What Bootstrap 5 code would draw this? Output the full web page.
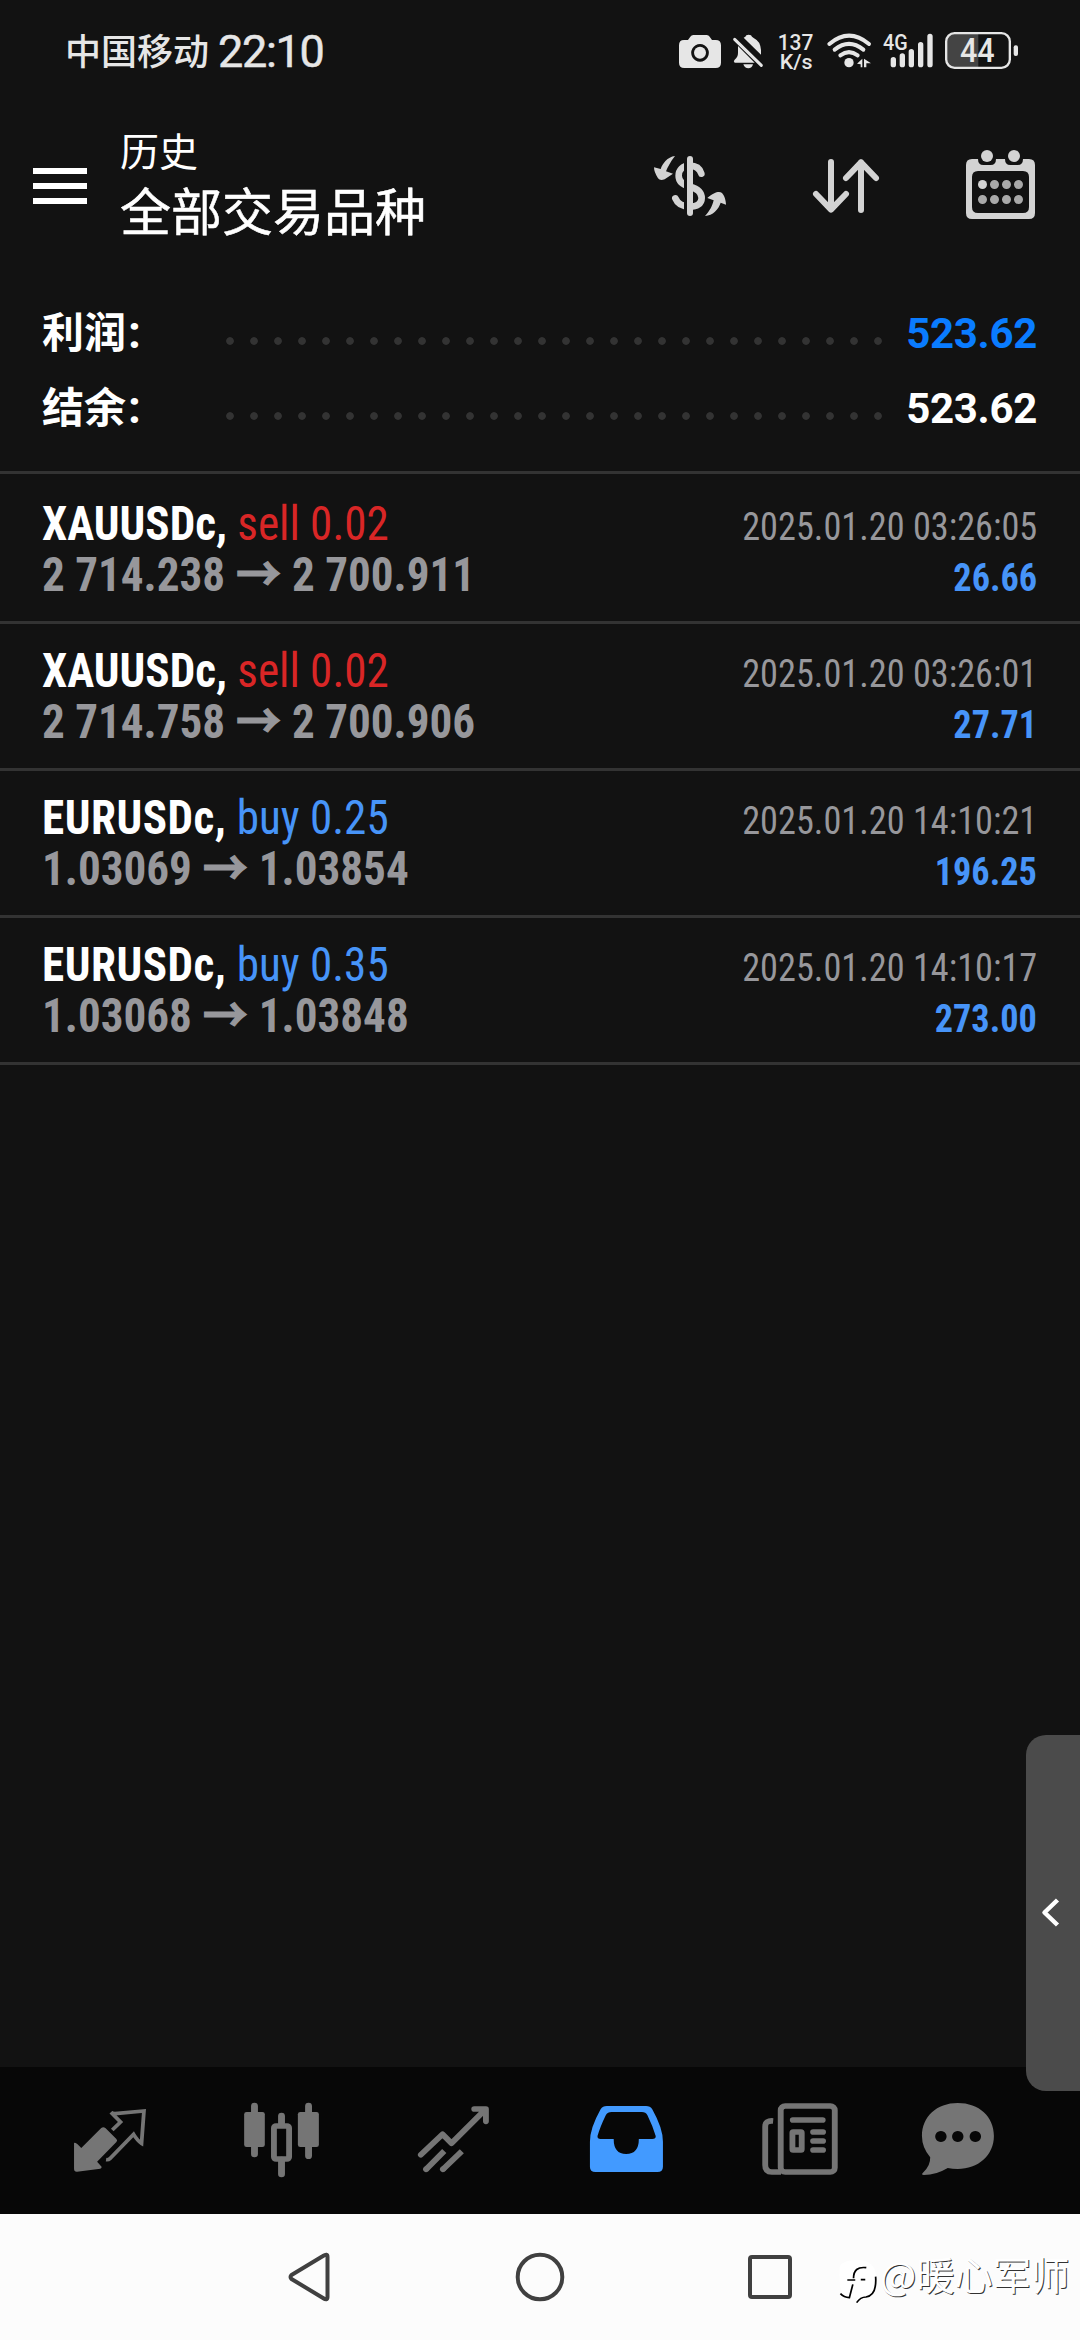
<!DOCTYPE html>
<html lang="zh-CN">
<head>
<meta charset="utf-8">
<meta name="viewport" content="width=device-width, initial-scale=1">
<title>历史</title>
<link href="https://cdn.jsdelivr.net/npm/bootstrap@5.3.0/dist/css/bootstrap.min.css" rel="stylesheet">
<style>
  body { background:#121212; color:#fff; font-family:Roboto,"Noto Sans CJK SC",sans-serif; width:1080px; height:2340px; overflow:hidden; }
  svg { display:block; flex:none; overflow:visible; }
  .status-bar { height:105px; padding:30px 61px 0 65px; color:#e6e6e6; }
  .carrier { font-size:36px; line-height:42px; font-weight:500; padding-top:2px; }
  .clock { font-size:45px; line-height:42px; letter-spacing:-1.3px; margin-left:9px; padding-top:1px; -webkit-text-stroke:.5px #e6e6e6; }
  .app-bar { height:180px; padding:0 45px 0 33px; }
  .menu-btn { padding-top:63px; width:87px; }
  .sub-title { font-size:39px; line-height:46px; margin-top:25px; }
  .main-title { font-size:51px; line-height:60px; margin-top:8px; -webkit-text-stroke:.5px #fff; }
  .summary { height:189px; padding:11px 43px 0 42px; }
  .sum-row { height:75px; font-weight:700; }
  .sum-label { width:176px; font-size:42px; line-height:75px; }
  .sum-label i { font-style:normal; margin-left:2px; font-size:46px; line-height:0; }
  .sum-dots { width:672px; height:24px; margin-top:33px; background:radial-gradient(circle at 12px 12px,#333 3.4px,transparent 4.2px) 0 0/24px 24px repeat-x; }
  .sum-value { font-size:42px; line-height:75px; letter-spacing:-.3px; }
  .text-profit { color:#0a7cff; }
  .rule { border-bottom:3px solid #333; }
  .deals { padding-top:3px; }
  .deal { height:147px; padding:21px 43px 0 42px; }
  .deal-line { height:51px; font-size:48px; line-height:51px; white-space:nowrap; font-family:"Roboto Condensed",Roboto,sans-serif; }
  .cond { display:inline-block; transform:scaleX(.94); transform-origin:left; }
  .cond-r { display:inline-block; transform:scaleX(.93); transform-origin:right; font-size:39px; }
  .eur { letter-spacing:.55px; }
  .arrow { font:700 48px/0 "Noto Sans CJK SC",sans-serif; -webkit-text-stroke:1.2px #97979b; margin:0 .5px; }
  .sell { color:#d92626; } .buy { color:#4794f8; }
  .dim { color:#97979b; }
  .tabs { height:147px; background:#070707; margin-top:1002px; color:#757575; }
  .tabs a { width:180px; color:inherit; }
  .tabs a.active { color:#429aff; }
  .sys-nav { height:126px; background:#fcfcfc; }
  .sys-nav span { width:231px; }
  .edge-handle { top:1735px; right:0; width:54px; height:356px; background:#4b4b4b; border-radius:20px 0 0 20px; padding-left:15px; }
  .credit { left:838px; top:2252px; width:242px; }
  .credit span { font:400 38.300px/50px "Noto Sans CJK SC",sans-serif; color:#fff; text-shadow:1px 1px 0 #333; white-space:nowrap; margin:-3px 0 0 3px; }
</style>
</head>
<body>
<header class="status-bar d-flex justify-content-between align-items-start">
  <div class="d-flex"><span class="carrier">中国移动</span><span class="clock">22:10</span></div>
  <div class="d-flex">
    <svg width="44" height="42" viewBox="174 90 132 126" fill="currentColor"><path fill-rule="evenodd" d="M192 120h12l7-10q3-5 9-5h40q6 0 9 5l7 10h11q16 0 16 16v52q0 16-16 16h-94q-16 0-16-16v-52q0-16 15-16zM240 132a26.500 26.500 0 1 0 .1 0z"/><circle cx="240" cy="158" r="18"/></svg>
    <svg width="32" height="42" viewBox="336 90 96 126" fill="currentColor" style="margin-left:10px"><path d="M371 113q6-2 8-7 7-4 14 0 2 5 8 8 20 9 22 36v14zM354 138l50 50h-60q-5-4 0-9 10-8 10-20zM370 193h29q-3 12-14 12t-15-12z"/><path d="M344 118L424 196" stroke="currentColor" stroke-width="9" stroke-linecap="round"/></svg>
    <svg width="37" height="42" viewBox="471 90 111 126" fill="currentColor" style="margin-left:13px" font-family="Roboto,sans-serif" font-weight="500"><text x="473" y="150" font-size="67" textLength="107" lengthAdjust="spacingAndGlyphs">137</text><text x="479" y="207" font-size="62" textLength="99" lengthAdjust="spacingAndGlyphs">K/s</text></svg>
    <svg width="46" height="42" viewBox="618 90 138 126" fill="none" stroke="currentColor" stroke-width="12" stroke-linecap="round" style="margin-left:12px"><path d="M628 132Q687 82 747 132M644 149Q687 114 730 149M661 166Q687 147 713 166"/><circle cx="687" cy="188" r="14" fill="currentColor" stroke="none"/><path d="M711 191L727 176V202H722V193zM732 176L753 190H739V202H732z" fill="currentColor" stroke="none"/></svg>
    <svg width="52" height="42" viewBox="786 90 156 126" fill="currentColor" style="margin-left:10px"><text x="789" y="151" font-size="66" font-weight="500" font-family="Roboto,sans-serif" textLength="74" lengthAdjust="spacingAndGlyphs">4G</text><path d="M820 179V194M847 168V194M874 155V194M902 134V194M930 109V194" stroke="currentColor" stroke-width="16" stroke-linecap="round"/></svg>
    <svg width="75" height="42" viewBox="972 90 225 126" style="margin-left:10px"><path d="M1075 100H1004Q979 100 979 125V179Q979 203 1004 203H1075z" fill="#444"/><rect x="978.500" y="99.500" width="191" height="104" rx="25" fill="none" stroke="currentColor" stroke-width="7"/><rect x="1181" y="136" width="13" height="32" rx="6" fill="currentColor"/><text x="1020" y="186" font-size="97" font-family="Roboto,sans-serif" font-weight="500" fill="currentColor" textLength="104" lengthAdjust="spacingAndGlyphs">44</text></svg>
  </div>
</header>

<nav class="app-bar d-flex align-items-start">
  <div class="menu-btn"><svg width="54" height="36" fill="#fff"><path d="M0 0h54v6H0zM0 15h54v6H0zM0 30h54v6H0z"/></svg></div>
  <div class="flex-grow-1"><div class="sub-title">历史</div><div class="main-title">全部交易品种</div></div>
  <div class="d-flex" style="margin-top:45px;color:#d3d3d3">
    <svg width="72" height="69" viewBox="102 450 216 207" fill="none" stroke-linecap="round"><path stroke="currentColor" stroke-width="20" d="M244 521C239 503 226 497 208 497C188 497 176 510 176 527C176 547 190 555 210 560C232 566 245 575 245 594C245 612 230 620 210 620C186 620 172 610 166 595"/><path d="M196.500 470V650" stroke="#121212" stroke-width="9" stroke-linecap="butt"/><path d="M210 477V639" stroke="currentColor" stroke-width="18"/><path fill="currentColor" d="M165 468C151 486 143 502 138 514L159 521L134 538Q120 543 114 535Q102 516 102 502L122 507C128 490 142 471 165 468ZM255 648C279 646 295 629 302 608L318 614C318 600 312 585 306 579C298 573 283 576 262 594L281 601C277 618 270 632 255 648Z"/></svg>
    <svg width="66" height="69" viewBox="579 450 198 207" fill="none" stroke="currentColor" stroke-width="18" stroke-linecap="round" stroke-linejoin="round" style="margin-left:87px"><path d="M633 486V628M588 582L633 629L678 582M723 630V487M678 534L723 487L768 534"/></svg>
    <svg width="69" height="69" viewBox="1038 450 207 207" fill="currentColor" style="margin-left:87px"><path fill-rule="evenodd" d="M1056 477H1074Q1074 495 1090 495H1112Q1128 495 1128 477H1155Q1155 495 1171 495H1193Q1209 495 1209 477H1227Q1245 477 1245 495V639Q1245 657 1227 657H1056Q1038 657 1038 639V495Q1038 477 1056 477ZM1074 513Q1056 513 1056 531V621Q1056 639 1074 639H1209Q1227 639 1227 621V531Q1227 513 1209 513Z"/><circle cx="1101" cy="468" r="18"/><circle cx="1182" cy="468" r="18"/><circle cx="1087.500" cy="553.500" r="13.500"/><path d="M1123.500 553.500h0M1159.500 553.500h0M1195.500 553.500h0M1087.500 598.500h0M1123.500 598.500h0M1159.500 598.500h0M1195.500 598.500h0" stroke="#a9a9a9" stroke-width="27" stroke-linecap="round"/></svg>
  </div>
</nav>

<section class="summary rule">
  <div class="sum-row d-flex"><span class="sum-label">利润<i>:</i></span><div class="sum-dots"></div><span class="sum-value ms-auto text-profit">523.62</span></div>
  <div class="sum-row d-flex"><span class="sum-label">结余<i>:</i></span><div class="sum-dots"></div><span class="sum-value ms-auto">523.62</span></div>
</section>

<main class="deals">
  <div class="deal rule">
    <div class="deal-line d-flex justify-content-between align-items-baseline"><span class="cond"><b>XAUUSDc,</b> <span class="sell">sell 0.02</span></span><span class="cond-r dim">2025.01.20 03:26:05</span></div>
    <div class="deal-line d-flex justify-content-between align-items-baseline"><b class="cond dim">2 714.238 <span class="arrow">→</span> 2 700.911</b><b class="cond-r buy">26.66</b></div>
  </div>
  <div class="deal rule">
    <div class="deal-line d-flex justify-content-between align-items-baseline"><span class="cond"><b>XAUUSDc,</b> <span class="sell">sell 0.02</span></span><span class="cond-r dim">2025.01.20 03:26:01</span></div>
    <div class="deal-line d-flex justify-content-between align-items-baseline"><b class="cond dim">2 714.758 <span class="arrow">→</span> 2 700.906</b><b class="cond-r buy">27.71</b></div>
  </div>
  <div class="deal rule">
    <div class="deal-line d-flex justify-content-between align-items-baseline"><span class="cond"><b class="eur">EURUSDc,</b> <span class="buy">buy 0.25</span></span><span class="cond-r dim">2025.01.20 14:10:21</span></div>
    <div class="deal-line d-flex justify-content-between align-items-baseline"><b class="cond dim">1.03069 <span class="arrow">→</span> 1.03854</b><b class="cond-r buy">196.25</b></div>
  </div>
  <div class="deal rule">
    <div class="deal-line d-flex justify-content-between align-items-baseline"><span class="cond"><b class="eur">EURUSDc,</b> <span class="buy">buy 0.35</span></span><span class="cond-r dim">2025.01.20 14:10:17</span></div>
    <div class="deal-line d-flex justify-content-between align-items-baseline"><b class="cond dim">1.03068 <span class="arrow">→</span> 1.03848</b><b class="cond-r buy">273.00</b></div>
  </div>
</main>

<nav class="tabs d-flex">
  <a><svg width="180" height="147" viewBox="0 21 522.700 441" preserveAspectRatio="none" fill="currentColor"><path d="M215 249Q220 246 236 264L294 204Q300 199 306 204L338 237Q342 241 338 246L282 305L295 320Q296 325 291 326L224 335Q215 336 215 326Z"/><path fill="none" stroke="currentColor" stroke-width="11" d="M326 210L350 186L322 157Q326 161 334 161L418 153L411 250Q400 243 388 223L319 296Q315 300 308 299"/></svg></a>
  <a><svg width="180" height="147" viewBox="522.700 21 522.700 441" preserveAspectRatio="none" fill="currentColor"><path d="M739 138V282M896 138V287M817.500 168V190M817.500 300V342" stroke="currentColor" stroke-width="20" stroke-linecap="round"/><rect x="709" y="156" width="60" height="105" rx="7"/><rect x="865" y="156" width="61" height="105" rx="7"/><rect x="795.500" y="198" width="44" height="99" rx="6" fill="none" stroke="currentColor" stroke-width="17"/></svg></a>
  <a><svg width="180" height="147" viewBox="1045.300 21 522.700 441" preserveAspectRatio="none" fill="none" stroke="currentColor" stroke-width="17" stroke-linejoin="round"><path stroke-linecap="round" d="M1222 284L1285 223L1311 250L1410 148M1377 147H1411V184"/><path d="M1290 273L1236 329M1341 274L1285 329"/><path stroke-linecap="round" d="M1237 328L1238 327M1286 328L1287 327"/></svg></a>
  <a class="active"><svg width="180" height="147" viewBox="0 21 522.700 441" preserveAspectRatio="none" fill="currentColor"><path fill-rule="evenodd" d="M194 138H308Q320 138 326 148Q357 205 357 245V320Q357 336 341 336H161Q145 336 145 320V245Q145 205 176 148Q182 138 194 138ZM208 156Q196 156 191 166Q175 200 167 228Q166 237 176 237H214Q214 282 250 282Q287 282 287 237H326Q337 237 336 228Q328 200 312 166Q307 156 296 156Z"/></svg></a>
  <a><svg width="180" height="147" viewBox="522.700 21 522.700 441" preserveAspectRatio="none" fill="none" stroke="currentColor" stroke-width="17"><rect x="699" y="138" width="157" height="198" rx="13"/><path d="M677 183Q654 181 654 200V315Q654 336 673 336H700"/><path stroke-linecap="round" d="M734 180H821M793 216H822M793 243H822M793 270H822"/><rect x="733" y="216" width="27" height="54" rx="2"/></svg></a>
  <a><svg width="180" height="147" viewBox="1045.300 21 522.700 441" preserveAspectRatio="none" fill="currentColor"><path fill-rule="evenodd" d="M1213 129C1275 129 1318 170 1318 228C1318 286 1272 327 1213 327Q1197 327 1184 324Q1150 345 1115 345Q1105 344 1112 338Q1134 318 1133 292Q1109 262 1109 228C1109 170 1152 129 1213 129ZM1164 213a16.500 16.500 0 1 0 .1 0ZM1213 213a16.500 16.500 0 1 0 .1 0ZM1264 213a16.500 16.500 0 1 0 .1 0Z"/></svg></a>
</nav>

<footer class="sys-nav d-flex justify-content-center align-items-center">
  <span class="d-flex justify-content-center"><svg width="44" height="52" viewBox="0 0 44 52" fill="none" stroke="#404040" stroke-width="4" stroke-linejoin="round"><path d="M4.500 24Q2.500 26 4.500 28L36 47Q40.500 50 40.500 46V6Q40.500 2 36 5Z"/></svg></span>
  <span class="d-flex justify-content-center"><svg width="52" height="52"><circle cx="26" cy="26" r="22.300" fill="none" stroke="#404040" stroke-width="4"/></svg></span>
  <span class="d-flex justify-content-center"><svg width="46" height="46"><rect x="2" y="3" width="40" height="40" rx="2" fill="none" stroke="#404040" stroke-width="4"/></svg></span>
</footer>

<aside class="edge-handle position-absolute d-flex"><svg width="20" height="32" viewBox="0 0 20 32" fill="none" stroke="#fff" stroke-width="4.500" stroke-linejoin="round" style="margin-top:162px"><path d="M16.500 3L3.500 15.500L16.500 28"/></svg></aside>

<div class="credit position-absolute d-flex">
  <svg width="39" height="50" viewBox="865 576 113 150" preserveAspectRatio="none"><path d="M870 620Q878 600 920 600Q974 600 975 650Q976 708 945 709Q930 711 919 728V712L885 712Q866 700 870 620Z" fill="#fff"/><path d="M947 623Q910 618 910 655M892 660H915M931 659H944M908 673L898 713Q882 712 872 701M974 650Q978 706 946 711Q930 711 919 728" fill="none" stroke="#000" stroke-width="5"/></svg>
  <span>@暖心军师</span>
</div>
<script src="https://cdn.jsdelivr.net/npm/bootstrap@5.3.0/dist/js/bootstrap.bundle.min.js"></script>
</body>
</html>
